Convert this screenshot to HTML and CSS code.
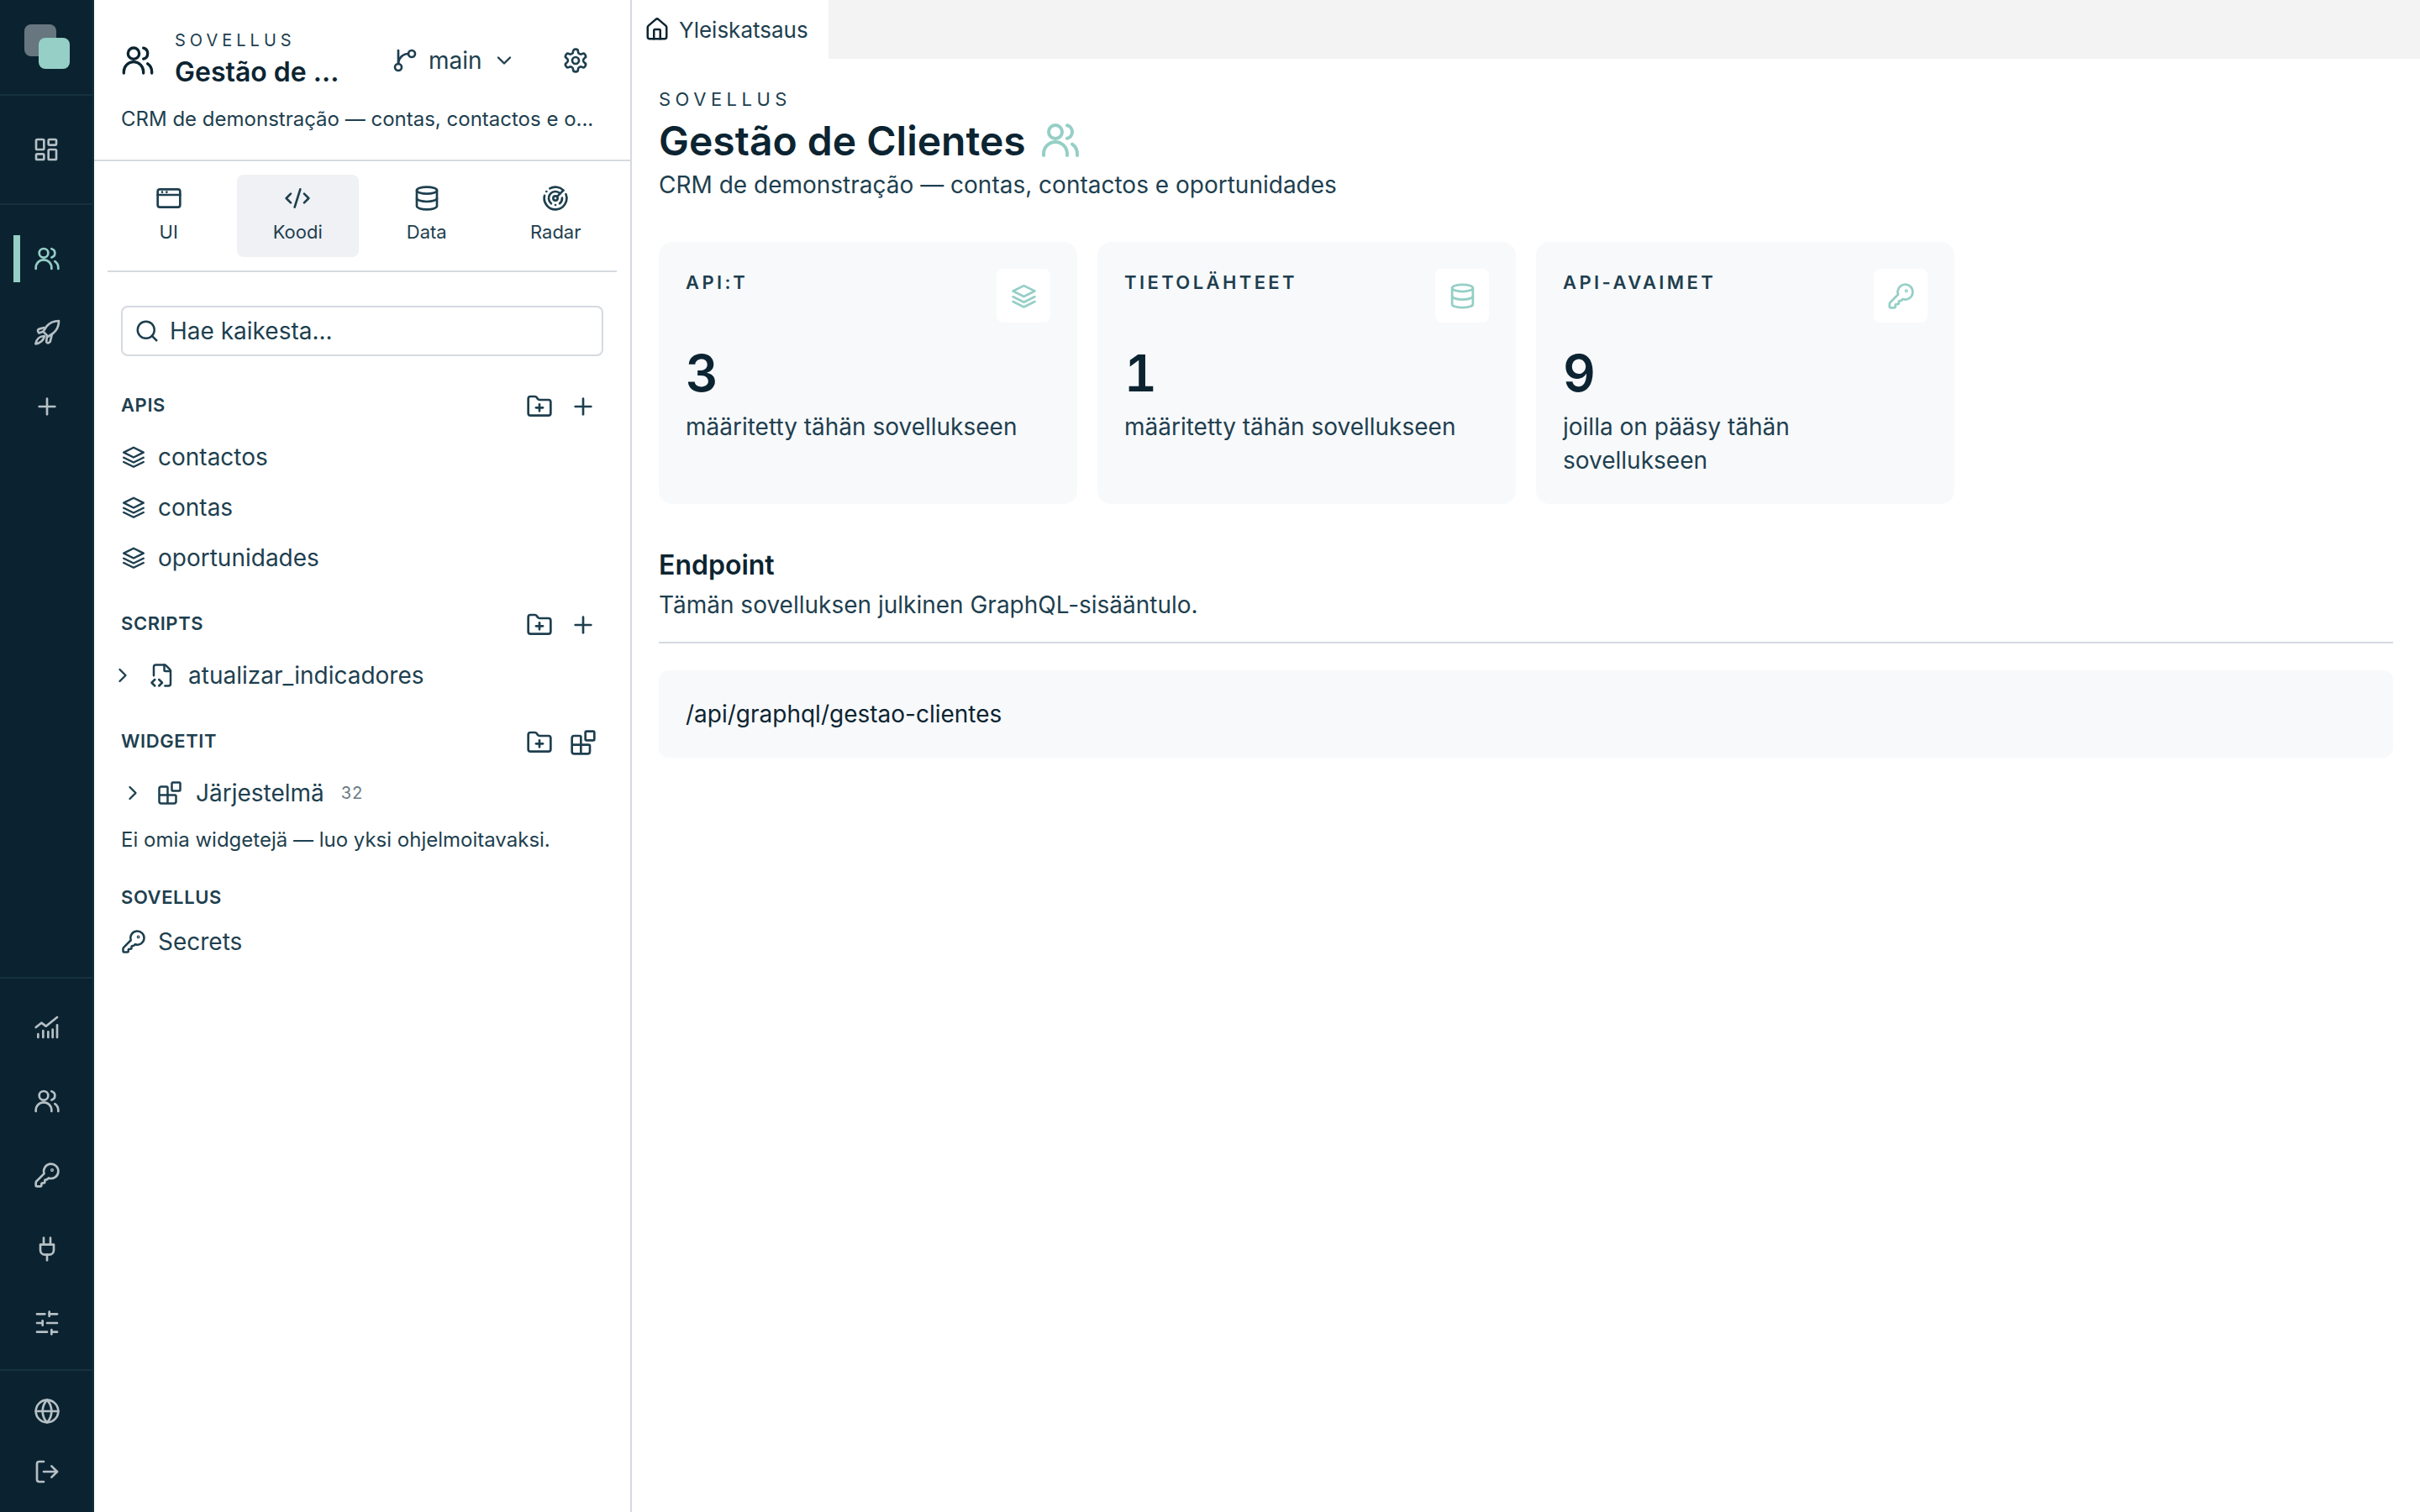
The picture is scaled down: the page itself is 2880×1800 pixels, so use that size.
FILE: index.html
```html
<!DOCTYPE html>
<html lang="fi">
<head>
    <meta charset="UTF-8">
    <meta name="viewport" content="width=device-width, initial-scale=1.0">
    <title>Gestão de Clientes</title>
    <link rel="stylesheet" href="styles.css">
</head>
<body>
    <!-- Icon sprite -->
    <svg class="sprite" xmlns="http://www.w3.org/2000/svg">
        <symbol id="i-users" viewBox="0 0 24 24"><circle cx="9" cy="7" r="4"/><path d="M2 21v-1a7 7 0 0 1 14 0v1"/><path d="M16 3.13a4 4 0 0 1 0 7.75"/><path d="M22 21v-1a7 7 0 0 0-3-5.7"/></symbol>
        <symbol id="i-dashboard" viewBox="0 0 24 24"><rect x="3" y="3" width="7" height="9" rx="1"/><rect x="14" y="3" width="7" height="5" rx="1"/><rect x="14" y="12" width="7" height="9" rx="1"/><rect x="3" y="16" width="7" height="5" rx="1"/></symbol>
        <symbol id="i-rocket" viewBox="0 0 24 24"><path d="M22.5 1.5C18 1.5 14 3.5 11.5 6.5L8.5 11l4.5 4.5 4.5-3C20.5 10 22.5 6 22.5 1.5Z"/><path d="M9.5 7.5 5 8.7a1.6 1.6 0 0 0-1 2.4l.8 1.2 3.7-1.3"/><path d="m12 15-.6 4.8a1.4 1.4 0 0 0 2.2 1.2l1.2-1 1.6-6.5"/><path d="M9 15c-3.5.3-6.5 3-7.2 7 3.8-.2 7-3.2 7.8-6.5a.5.5 0 0 0-.6-.5Z"/></symbol>
        <symbol id="i-plus" viewBox="0 0 24 24"><path d="M5 12h14"/><path d="M12 5v14"/></symbol>
        <symbol id="i-chart" viewBox="0 0 24 24"><path d="M2 12l5-4 4 3 10-8"/><path d="M4 21v-3"/><path d="M8.5 21v-6"/><path d="M13 21v-5"/><path d="M17 21v-7"/><path d="M21 21V10"/></symbol>
        <symbol id="i-key" viewBox="0 0 24 24"><path d="M2.586 17.414A2 2 0 0 0 2 18.828V21a1 1 0 0 0 1 1h3a1 1 0 0 0 1-1v-1a1 1 0 0 1 1-1h1a1 1 0 0 0 1-1v-1a1 1 0 0 1 1-1h.172a2 2 0 0 0 1.414-.586l.814-.814a6.5 6.5 0 1 0-4-4z"/><circle cx="16.5" cy="7.5" r=".5"/></symbol>
        <symbol id="i-plug" viewBox="0 0 24 24"><path d="M12 22v-5"/><path d="M9 8V2"/><path d="M15 8V2"/><path d="M18 8v5a4 4 0 0 1-4 4h-4a4 4 0 0 1-4-4V8Z"/></symbol>
        <symbol id="i-sliders" viewBox="0 0 24 24"><path d="M21 4h-7"/><path d="M10 4H3"/><path d="M21 12h-9"/><path d="M8 12H3"/><path d="M21 20h-5"/><path d="M12 20H3"/><path d="M14 2v4"/><path d="M8 10v4"/><path d="M16 18v4"/></symbol>
        <symbol id="i-globe" viewBox="0 0 24 24"><circle cx="12" cy="12" r="10"/><path d="M12 2a14.5 14.5 0 0 0 0 20 14.5 14.5 0 0 0 0-20"/><path d="M2 12h20"/></symbol>
        <symbol id="i-logout" viewBox="0 0 24 24"><path d="M9 21H5a2 2 0 0 1-2-2V5a2 2 0 0 1 2-2h4"/><path d="m16 17 5-5-5-5"/><path d="M21 12H9"/></symbol>
        <symbol id="i-branch" viewBox="0 0 24 24"><path d="M6 15V3"/><circle cx="18" cy="6" r="3"/><circle cx="6" cy="18" r="3"/><path d="M15 6a9 9 0 0 0-9 9"/></symbol>
        <symbol id="i-chevron-down" viewBox="0 0 24 24"><path d="m6 9 6 6 6-6"/></symbol>
        <symbol id="i-chevron-right" viewBox="0 0 24 24"><path d="m9 18 6-6-6-6"/></symbol>
        <symbol id="i-gear" viewBox="0 0 24 24"><path d="M12.22 2h-.44a2 2 0 0 0-2 2v.18a2 2 0 0 1-1 1.73l-.43.25a2 2 0 0 1-2 0l-.15-.08a2 2 0 0 0-2.73.73l-.22.38a2 2 0 0 0 .73 2.73l.15.1a2 2 0 0 1 1 1.72v.51a2 2 0 0 1-1 1.74l-.15.09a2 2 0 0 0-.73 2.73l.22.38a2 2 0 0 0 2.73.73l.15-.08a2 2 0 0 1 2 0l.43.25a2 2 0 0 1 1 1.73V20a2 2 0 0 0 2 2h.44a2 2 0 0 0 2-2v-.18a2 2 0 0 1 1-1.73l.43-.25a2 2 0 0 1 2 0l.15.08a2 2 0 0 0 2.73-.73l.22-.39a2 2 0 0 0-.73-2.73l-.15-.08a2 2 0 0 1-1-1.74v-.5a2 2 0 0 1 1-1.74l.15-.09a2 2 0 0 0 .73-2.73l-.22-.38a2 2 0 0 0-2.73-.73l-.15.08a2 2 0 0 1-2 0l-.43-.25a2 2 0 0 1-1-1.73V4a2 2 0 0 0-2-2z"/><circle cx="12" cy="12" r="3"/></symbol>
        <symbol id="i-browser" viewBox="0 0 24 24"><rect x="2" y="4" width="20" height="16" rx="2"/><path d="M2 9h20"/><path d="M6 6.5h.01"/><path d="M10 6.5h.01"/></symbol>
        <symbol id="i-code" viewBox="0 0 24 24"><path d="m18 16 4-4-4-4"/><path d="m6 8-4 4 4 4"/><path d="m14.5 4-5 16"/></symbol>
        <symbol id="i-database" viewBox="0 0 24 24"><ellipse cx="12" cy="5" rx="9" ry="3"/><path d="M3 5v14a9 3 0 0 0 18 0V5"/><path d="M3 12a9 3 0 0 0 18 0"/></symbol>
        <symbol id="i-radar" viewBox="0 0 24 24"><path d="M19.07 4.93A10 10 0 0 0 6.99 3.34"/><path d="M4 6h.01"/><path d="M2.29 9.62A10 10 0 1 0 21.31 8.35"/><path d="M16.24 7.76A6 6 0 1 0 8.23 16.67"/><path d="M12 18h.01"/><path d="M17.99 11.66A6 6 0 0 1 15.77 16.67"/><circle cx="12" cy="12" r="2"/><path d="m13.41 10.59 5.66-5.66"/></symbol>
        <symbol id="i-search" viewBox="0 0 24 24"><circle cx="11" cy="11" r="8"/><path d="m21 21-4.3-4.3"/></symbol>
        <symbol id="i-folder-plus" viewBox="0 0 24 24"><path d="M12 10v6"/><path d="M9 13h6"/><path d="M20 20a2 2 0 0 0 2-2V8a2 2 0 0 0-2-2h-7.9a2 2 0 0 1-1.69-.9L9.6 3.9A2 2 0 0 0 7.93 3H4a2 2 0 0 0-2 2v13a2 2 0 0 0 2 2Z"/></symbol>
        <symbol id="i-layers" viewBox="0 0 24 24"><path d="M12 3 2.6 7.7 12 12.4l9.4-4.7L12 3Z"/><path d="m2.6 12.6 9.4 4.6 9.4-4.6"/><path d="m2.6 16.8 9.4 4.6 9.4-4.6"/></symbol>
        <symbol id="i-file-code" viewBox="0 0 24 24"><path d="M4 12.15V4a2 2 0 0 1 2-2h8a2.4 2.4 0 0 1 1.706.706l3.588 3.588A2.4 2.4 0 0 1 20 8v12a2 2 0 0 1-2 2h-3.35"/><path d="M14 2v5a1 1 0 0 0 1 1h5"/><path d="m5 16-3 3 3 3"/><path d="m9 22 3-3-3-3"/></symbol>
        <symbol id="i-blocks" viewBox="0 0 24 24"><path d="M10 22V7a1 1 0 0 0-1-1H4a2 2 0 0 0-2 2v12a2 2 0 0 0 2 2h12a2 2 0 0 0 2-2v-5a1 1 0 0 0-1-1H2"/><rect x="14" y="2" width="8" height="8" rx="1"/></symbol>
        <symbol id="i-home" viewBox="0 0 24 24"><path d="M15 21v-8a1 1 0 0 0-1-1h-4a1 1 0 0 0-1 1v8"/><path d="M3 10a2 2 0 0 1 .709-1.528l7-6a2 2 0 0 1 2.582 0l7 6A2 2 0 0 1 21 10v9a2 2 0 0 1-2 2H5a2 2 0 0 1-2-2z"/></symbol>
    </svg>

    <div class="app">
        <!-- Icon rail -->
        <nav class="rail">
            <div class="rail-logo">
                <span class="logo-back"></span>
                <span class="logo-front"></span>
            </div>
            <div class="rail-home">
                <a class="rail-item"><svg class="icon"><use href="#i-dashboard"/></svg></a>
            </div>
            <div class="rail-apps">
                <a class="rail-item active"><svg class="icon"><use href="#i-users"/></svg></a>
                <a class="rail-item"><svg class="icon"><use href="#i-rocket"/></svg></a>
                <a class="rail-item"><svg class="icon"><use href="#i-plus"/></svg></a>
            </div>
            <div class="rail-admin">
                <a class="rail-item"><svg class="icon"><use href="#i-chart"/></svg></a>
                <a class="rail-item"><svg class="icon"><use href="#i-users"/></svg></a>
                <a class="rail-item"><svg class="icon"><use href="#i-key"/></svg></a>
                <a class="rail-item"><svg class="icon"><use href="#i-plug"/></svg></a>
                <a class="rail-item"><svg class="icon"><use href="#i-sliders"/></svg></a>
            </div>
            <div class="rail-footer">
                <a class="rail-item small"><svg class="icon"><use href="#i-globe"/></svg></a>
                <a class="rail-item small"><svg class="icon"><use href="#i-logout"/></svg></a>
            </div>
        </nav>

        <!-- App panel -->
        <aside class="panel">
            <header class="panel-header">
                <div class="panel-top">
                    <svg class="icon icon-app"><use href="#i-users"/></svg>
                    <div class="panel-title">
                        <div class="panel-eyebrow">SOVELLUS</div>
                        <div class="panel-name">Gestão de ...</div>
                    </div>
                    <div class="branch">
                        <svg class="icon"><use href="#i-branch"/></svg>
                        <span>main</span>
                        <svg class="icon icon-chevron"><use href="#i-chevron-down"/></svg>
                    </div>
                    <svg class="icon icon-gear"><use href="#i-gear"/></svg>
                </div>
                <div class="panel-desc">CRM de demonstração — contas, contactos e o...</div>
            </header>

            <div class="tabs">
                <a class="tab"><svg class="icon"><use href="#i-browser"/></svg><span>UI</span></a>
                <a class="tab active"><svg class="icon"><use href="#i-code"/></svg><span>Koodi</span></a>
                <a class="tab"><svg class="icon"><use href="#i-database"/></svg><span>Data</span></a>
                <a class="tab"><svg class="icon"><use href="#i-radar"/></svg><span>Radar</span></a>
            </div>

            <div class="panel-body">
                <div class="search">
                    <svg class="icon icon-search"><use href="#i-search"/></svg>
                    <span>Hae kaikesta...</span>
                </div>

                <div class="section-head first">
                    <span>APIS</span>
                    <div class="section-actions">
                        <svg class="icon"><use href="#i-folder-plus"/></svg>
                        <svg class="icon"><use href="#i-plus"/></svg>
                    </div>
                </div>
                <div class="tree-row"><svg class="icon"><use href="#i-layers"/></svg><span>contactos</span></div>
                <div class="tree-row"><svg class="icon"><use href="#i-layers"/></svg><span>contas</span></div>
                <div class="tree-row"><svg class="icon"><use href="#i-layers"/></svg><span>oportunidades</span></div>

                <div class="section-head">
                    <span>SCRIPTS</span>
                    <div class="section-actions">
                        <svg class="icon"><use href="#i-folder-plus"/></svg>
                        <svg class="icon"><use href="#i-plus"/></svg>
                    </div>
                </div>
                <div class="tree-row script-row">
                    <svg class="icon icon-caret"><use href="#i-chevron-right"/></svg>
                    <svg class="icon"><use href="#i-file-code"/></svg>
                    <span>atualizar_indicadores</span>
                </div>

                <div class="section-head">
                    <span>WIDGETIT</span>
                    <div class="section-actions">
                        <svg class="icon"><use href="#i-folder-plus"/></svg>
                        <svg class="icon"><use href="#i-blocks"/></svg>
                    </div>
                </div>
                <div class="tree-row widget-row">
                    <svg class="icon icon-caret"><use href="#i-chevron-right"/></svg>
                    <svg class="icon"><use href="#i-blocks"/></svg>
                    <span>Järjestelmä</span>
                    <span class="count">32</span>
                </div>
                <p class="empty-note">Ei omia widgetejä — luo yksi ohjelmoitavaksi.</p>

                <div class="section-head plain"><span>SOVELLUS</span></div>
                <div class="tree-row"><svg class="icon"><use href="#i-key"/></svg><span>Secrets</span></div>
            </div>
        </aside>

        <!-- Main area -->
        <main class="main">
            <div class="tabstrip">
                <div class="doc-tab">
                    <svg class="icon"><use href="#i-home"/></svg>
                    <span>Yleiskatsaus</span>
                </div>
            </div>
            <div class="content">
                <div class="eyebrow">SOVELLUS</div>
                <h1 class="page-title">Gestão de Clientes<svg class="icon icon-title"><use href="#i-users"/></svg></h1>
                <p class="page-sub">CRM de demonstração — contas, contactos e oportunidades</p>

                <div class="cards">
                    <div class="card">
                        <div class="card-head">
                            <span class="card-label">API:T</span>
                            <span class="card-icon"><svg class="icon"><use href="#i-layers"/></svg></span>
                        </div>
                        <div class="card-value">3</div>
                        <div class="card-text">määritetty tähän sovellukseen</div>
                    </div>
                    <div class="card">
                        <div class="card-head">
                            <span class="card-label">TIETOLÄHTEET</span>
                            <span class="card-icon"><svg class="icon"><use href="#i-database"/></svg></span>
                        </div>
                        <div class="card-value">1</div>
                        <div class="card-text">määritetty tähän sovellukseen</div>
                    </div>
                    <div class="card">
                        <div class="card-head">
                            <span class="card-label">API-AVAIMET</span>
                            <span class="card-icon"><svg class="icon"><use href="#i-key"/></svg></span>
                        </div>
                        <div class="card-value">9</div>
                        <div class="card-text">joilla on pääsy tähän sovellukseen</div>
                    </div>
                </div>

                <h2 class="section-title">Endpoint</h2>
                <p class="section-sub">Tämän sovelluksen julkinen GraphQL-sisääntulo.</p>
                <div class="endpoint">/api/graphql/gestao-clientes</div>
            </div>
        </main>
    </div>
</body>
</html>
```

FILE: styles.css
```css
* {
    box-sizing: border-box;
}
body {
    margin: 0;
    font-family: Inter, "Noto Sans", sans-serif;
    color: #0c2431;
    background: #fff;
}
.sprite {
    display: none;
}
.icon {
    display: block;
    width: 32px;
    height: 32px;
    flex: none;
    fill: none;
    stroke: currentColor;
    stroke-width: 2;
    stroke-linecap: round;
    stroke-linejoin: round;
}
.app {
    display: flex;
    height: 100vh;
    overflow: hidden;
}

/* Icon rail */
.rail {
    width: 112px;
    flex: none;
    display: flex;
    flex-direction: column;
    background: #0b2330;
    border-right: 2px solid #12303e;
    color: #b6c0c5;
}
.rail-logo {
    position: relative;
    height: 114px;
    flex: none;
    border-bottom: 2px solid #16313f;
}
.logo-back {
    position: absolute;
    left: 29px;
    top: 29px;
    width: 38px;
    height: 38px;
    border-radius: 8px;
    background: #67767f;
}
.logo-front {
    position: absolute;
    left: 46px;
    top: 45px;
    width: 37px;
    height: 37px;
    border-radius: 8px;
    background: #95cfc6;
}
.rail-home {
    height: 130px;
    flex: none;
    display: flex;
    align-items: center;
    border-bottom: 2px solid #16313f;
}
.rail-apps {
    flex: 1;
    padding-top: 20px;
}
.rail-admin {
    height: 467px;
    flex: none;
    padding-top: 14px;
    border-top: 2px solid #16313f;
}
.rail-footer {
    height: 170px;
    flex: none;
    padding-top: 12px;
    border-top: 2px solid #16313f;
}
.rail-item {
    position: relative;
    display: flex;
    justify-content: center;
    align-items: center;
    width: 112px;
    height: 88px;
}
.rail-item.small {
    height: 72px;
}
.rail-item.active {
    color: #95cfc6;
}
.rail-item.active::before {
    content: "";
    position: absolute;
    left: 16px;
    top: 16px;
    width: 8px;
    height: 56px;
    background: #95cfc6;
}

/* App panel */
.panel {
    width: 640px;
    flex: none;
    border-right: 2px solid #d5dae0;
    color: #1e3f4f;
}
.panel-header {
    height: 192px;
    padding: 36px 32px 0;
    border-bottom: 2px solid #d5dae0;
}
.panel-top {
    display: flex;
    align-items: center;
}
.icon-app {
    width: 40px;
    height: 40px;
    margin-right: 24px;
    color: #0c2431;
}
.panel-title {
    width: 196px;
}
.panel-eyebrow {
    font-size: 20px;
    line-height: 24px;
    letter-spacing: 5px;
}
.panel-name {
    margin-top: 4px;
    font-size: 32px;
    line-height: 44px;
    font-weight: 600;
    color: #0c2431;
    white-space: nowrap;
}
.branch {
    display: flex;
    align-items: center;
    margin-left: 62px;
    font-size: 28px;
}
.branch span {
    margin-left: 12px;
}
.icon-chevron {
    width: 28px;
    height: 28px;
    margin-left: 12px;
}
.icon-gear {
    margin-left: 55px;
}
.panel-desc {
    margin-top: 16px;
    font-size: 24px;
    line-height: 36px;
    white-space: nowrap;
}
.tabs {
    display: grid;
    grid-template-columns: repeat(4, 1fr);
    gap: 8px;
    margin: 0 16px;
    padding: 16px 0;
    border-bottom: 2px solid #d5dae0;
}
.tab {
    display: flex;
    flex-direction: column;
    align-items: center;
    height: 98px;
    padding-top: 12px;
    border-radius: 8px;
    font-size: 22px;
}
.tab span {
    margin-top: 11px;
}
.tab.active {
    background: #f0f1f5;
}
.panel-body {
    padding: 40px 32px 0;
}
.search {
    display: flex;
    align-items: center;
    height: 60px;
    padding: 0 14px;
    border: 2px solid #d5dae0;
    border-radius: 8px;
    font-size: 28px;
}
.icon-search {
    width: 30px;
    height: 30px;
    margin-right: 12px;
}
.section-head {
    display: flex;
    justify-content: space-between;
    align-items: center;
    height: 60px;
    margin-top: 20px;
    font-size: 22px;
    font-weight: 600;
    letter-spacing: .6px;
}
.section-head.first {
    margin-top: 30px;
}
.section-head.plain {
    height: 42px;
    margin-top: 32px;
}
.section-head > span {
    padding-bottom: 4px;
}
.section-actions {
    display: flex;
    gap: 20px;
    margin-right: 8px;
}
.tree-row {
    display: flex;
    align-items: center;
    gap: 14px;
    height: 60px;
    font-size: 28px;
}
.tree-row .icon {
    width: 30px;
    height: 30px;
}
.tree-row .icon-caret {
    width: 28px;
    height: 28px;
}
.script-row {
    gap: 0;
}
.script-row .icon-caret {
    margin-left: -12px;
    margin-right: 18px;
}
.script-row span {
    margin-left: 16px;
}
.widget-row {
    gap: 0;
}
.widget-row .icon-caret {
    margin-left: 0;
    margin-right: 15px;
}
.widget-row span {
    margin-left: 16px;
}
.widget-row .count {
    margin-left: 20px;
    font-variant-numeric: tabular-nums;
}
.count {
    font-size: 20px;
    color: #6b7a84;
}
.empty-note {
    margin: 9px 0 0;
    font-size: 24px;
    line-height: 34px;
}

/* Main area */
.main {
    flex: 1;
    min-width: 0;
}
.tabstrip {
    height: 70px;
    background: #f3f3f3;
}
.doc-tab {
    display: flex;
    align-items: center;
    gap: 11px;
    width: 234px;
    height: 70px;
    padding-left: 15px;
    background: #fff;
    font-size: 26px;
    color: #1e3f4f;
}
.doc-tab .icon {
    width: 30px;
    height: 30px;
    color: #0c2431;
}
.content {
    padding: 33px 32px 0;
}
.eyebrow {
    font-size: 22px;
    line-height: 30px;
    letter-spacing: 5.5px;
    color: #1e3f4f;
}
.page-title {
    display: flex;
    align-items: center;
    gap: 17px;
    height: 60px;
    margin: 4px 0 0;
    font-size: 48px;
    font-weight: 600;
}
.icon-title {
    width: 48px;
    height: 48px;
    color: #95cfc6;
}
.page-sub {
    margin: 3px 0 0;
    font-size: 28px;
    line-height: 40px;
    color: #1e3f4f;
}
.cards {
    display: grid;
    grid-template-columns: repeat(3, 498px);
    gap: 24px;
    margin-top: 48px;
}
.card {
    height: 312px;
    padding: 32px;
    border-radius: 16px;
    background: #f8f9fb;
}
.card-head {
    display: flex;
    justify-content: space-between;
    align-items: flex-start;
}
.card-label {
    font-size: 22px;
    line-height: 32px;
    font-weight: 600;
    letter-spacing: 3.4px;
    color: #1e3f4f;
}
.card-icon {
    display: flex;
    justify-content: center;
    align-items: center;
    width: 64px;
    height: 64px;
    border-radius: 8px;
    background: #fff;
    color: #95cfc6;
}
.card-icon .icon {
    width: 33px;
    height: 33px;
}
.card-value {
    margin-top: 24px;
    font-size: 60px;
    line-height: 72px;
    font-weight: 600;
    font-variant-numeric: tabular-nums;
}
.card-text {
    margin-top: 8px;
    font-size: 28px;
    line-height: 40px;
    color: #1e3f4f;
}
.section-title {
    margin: 51px 0 0;
    font-size: 32px;
    line-height: 44px;
    font-weight: 600;
}
.section-sub {
    margin: 5px 0 0;
    padding-bottom: 24px;
    border-bottom: 2px solid #d5dae0;
    font-size: 28px;
    line-height: 40px;
    color: #1e3f4f;
}
.endpoint {
    display: flex;
    align-items: center;
    height: 104px;
    margin-top: 32px;
    padding: 0 32px;
    border-radius: 12px;
    background: #f8f9fb;
    font-size: 28px;
}
```
